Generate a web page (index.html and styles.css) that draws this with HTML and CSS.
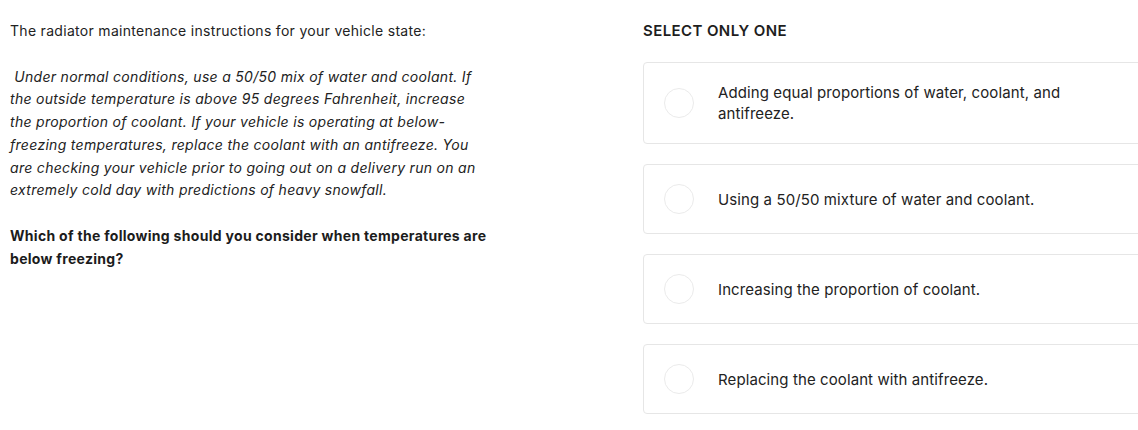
FILE: index.html
```html
<!DOCTYPE html>
<html>
<head>
<meta charset="utf-8">
<link rel="stylesheet" href="styles.css">
</head>
<body>
<div class="page">
  <div class="question">
    <p class="intro">The radiator maintenance instructions for your vehicle state:</p>
    <p class="passage">&nbsp;Under normal conditions, use a 50/50 mix of water and coolant. If the outside temperature is above 95 degrees Fahrenheit, increase the proportion of coolant. If your vehicle is operating at below-freezing temperatures, replace the coolant with an antifreeze. You are checking your vehicle prior to going out on a delivery run on an extremely cold day with predictions of heavy snowfall.</p>
    <p class="prompt">Which of the following should you consider when temperatures are below freezing?</p>
  </div>
  <div class="answers">
    <div class="label">SELECT ONLY ONE</div>
    <div class="options">
      <div class="option"><span class="radio"></span><span class="text">Adding equal proportions of water, coolant, and antifreeze.</span></div>
      <div class="option"><span class="radio"></span><span class="text">Using a 50/50 mixture of water and coolant.</span></div>
      <div class="option"><span class="radio"></span><span class="text">Increasing the proportion of coolant.</span></div>
      <div class="option"><span class="radio"></span><span class="text">Replacing the coolant with antifreeze.</span></div>
    </div>
  </div>
</div>
</body>
</html>
```
FILE: styles.css
```css
html, body {
  margin: 0;
  padding: 0;
  background: #fff;
  overflow: hidden;
}
body {
  font-family: Inter, "Noto Sans", "Liberation Sans", sans-serif;
  font-size: 14px;
  line-height: 22px;
  color: #222;
}
.page {
  display: grid;
  grid-template-columns: 535px 540px;
  column-gap: 98px;
  padding: 20px 0 0 10px;
  width: 1300px;
}
.question {
  letter-spacing: 0.3px;
  line-height: 22.75px;
}
.question p {
  margin: 0 0 22.75px 0;
}
.passage {
  font-style: italic;
  width: 478px;
}
.prompt {
  font-weight: 700;
  width: 490px;
  color: #1c1c1c;
}
.label {
  font-size: 15px;
  font-weight: 600;
  letter-spacing: 0.4px;
  margin-bottom: 20px;
  color: #1e1e1e;
}
.options {
  display: flex;
  flex-direction: column;
  gap: 20px;
}
.option {
  display: flex;
  align-items: center;
  gap: 24px;
  padding: 19px 20px;
  border: 1px solid #e6e6e6;
  border-radius: 4px;
  min-height: 30px;
}
.radio {
  flex: none;
  width: 28px;
  height: 28px;
  border: 1.5px solid #ebebeb;
  border-radius: 50%;
}
.text {
  width: 380px;
  font-size: 15px;
  letter-spacing: 0.1px;
  line-height: 21px;
}
```
